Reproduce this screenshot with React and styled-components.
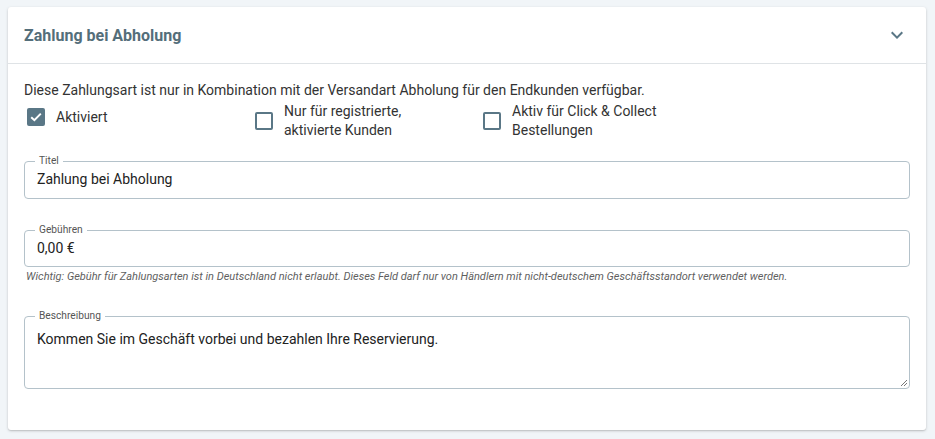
import React, { useState } from 'react'
import styled, { createGlobalStyle } from 'styled-components'

const GlobalStyle = createGlobalStyle`
  html, body { margin: 0; padding: 0; background: #f1f5f8; }
  body { font-family: Roboto, "Noto Sans", sans-serif; color: #333; }
  * { box-sizing: border-box; }
`

const Page = styled.div`
  padding: 7px 9px 8px 8px;
`

const Card = styled.div`
  background: #fff;
  border-radius: 3px;
  box-shadow: 0 1px 3px rgba(0,0,0,0.18), 0 1px 1px rgba(0,0,0,0.08);
`

const Header = styled.div`
  height: 57px;
  display: flex;
  align-items: center;
  justify-content: space-between;
  padding: 0 17px 0 16px;
  border-bottom: 1px solid #dfe3e6;
`

const Title = styled.h2`
  margin: 0;
  font-size: 16px;
  font-weight: 700;
  color: #546e7a;
`

const Body = styled.div`
  padding: 16px 16px 41px 16px;
`

const Note = styled.p`
  margin: 0;
  font-size: 14px;
  line-height: 20px;
  color: #333;
`

const CheckRow = styled.div`
  display: grid;
  grid-template-columns: 228px 228px 1fr;
  margin-top: 2px;
  padding-left: 3px;
`

const CheckItem = styled.label`
  display: flex;
  align-items: flex-start;
  gap: 11px;
  font-size: 14px;
  line-height: 19px;
  color: #333;
`

const Box = styled.span`
  width: 18px;
  height: 18px;
  flex: none;
  margin-top: ${p => p.$top}px;
  border-radius: 2px;
  border: 2px solid #5a7786;
  background: ${p => (p.$checked ? '#5a7786' : '#fff')};
  display: flex;
  align-items: center;
  justify-content: center;
`

const Label = styled.span`
  display: block;
  margin-top: ${p => p.$top || 0}px;
`

const Field = styled.fieldset`
  margin: ${p => p.$mt}px 0 0 0;
  padding: 0 12px;
  border: 1px solid #b4c2ca;
  border-radius: 4px;
  height: ${p => p.$h}px;
  min-width: 0;
  position: relative;
`

const Legend = styled.legend`
  font-size: 10.2px;
  color: #555;
  padding: 0 4px;
  margin-left: -2px;
  line-height: 10px;
`

const Value = styled.div`
  font-size: 14px;
  color: #222;
  line-height: 20px;
  margin-top: ${p => p.$top || 3}px;
`

const Helper = styled.div`
  font-size: 11px;
  font-style: italic;
  color: #5f5f5f;
  margin: 3px 0 0 2px;
`

const Grip = styled.svg`
  position: absolute;
  right: 1px;
  bottom: 1px;
`

const Check = ({ checked, top, labelTop, children }) => (
  <CheckItem>
    <Box $checked={checked} $top={top}>
      {checked && (
        <svg width="12" height="10" viewBox="0 0 12 10">
          <path d="M1.2 5.2 L4.4 8.2 L10.8 1.6" fill="none" stroke="#fff" strokeWidth="2" />
        </svg>
      )}
    </Box>
    <Label $top={labelTop}>{children}</Label>
  </CheckItem>
)

export default function App() {
  const [open] = useState(true)
  return (
    <Page>
      <GlobalStyle />
      <Card>
        <Header>
          <Title>Zahlung bei Abholung</Title>
          <svg width="24" height="24" viewBox="0 0 24 24">
            <path d="M16.59 8.59 12 13.17 7.41 8.59 6 10l6 6 6-6z" fill="#5a7786" />
          </svg>
        </Header>
        {open && (
          <Body>
            <Note>Diese Zahlungsart ist nur in Kombination mit der Versandart Abholung für den Endkunden verfügbar.</Note>
            <CheckRow>
              <Check checked top={6} labelTop={6}>Aktiviert</Check>
              <Check top={10}>Nur für registrierte,<br />aktivierte Kunden</Check>
              <Check top={10}>Aktiv für Click &amp; Collect<br />Bestellungen</Check>
            </CheckRow>
            <Field $mt={16} $h={43}>
              <Legend>Titel</Legend>
              <Value>Zahlung bei Abholung</Value>
            </Field>
            <Field $mt={26} $h={42}>
              <Legend>Gebühren</Legend>
              <Value>0,00 €</Value>
            </Field>
            <Helper>Wichtig: Gebühr für Zahlungsarten ist in Deutschland nicht erlaubt. Dieses Feld darf nur von Händlern mit nicht-deutschem Geschäftsstandort verwendet werden.</Helper>
            <Field $mt={28} $h={78}>
              <Legend>Beschreibung</Legend>
              <Value $top={8}>Kommen Sie im Geschäft vorbei und bezahlen Ihre Reservierung.</Value>
              <Grip width="9" height="9" viewBox="0 0 9 9">
                <path d="M8 2 L2 8 M8 5 L5 8" stroke="#777" strokeWidth="1" />
              </Grip>
            </Field>
          </Body>
        )}
      </Card>
    </Page>
  )
}
